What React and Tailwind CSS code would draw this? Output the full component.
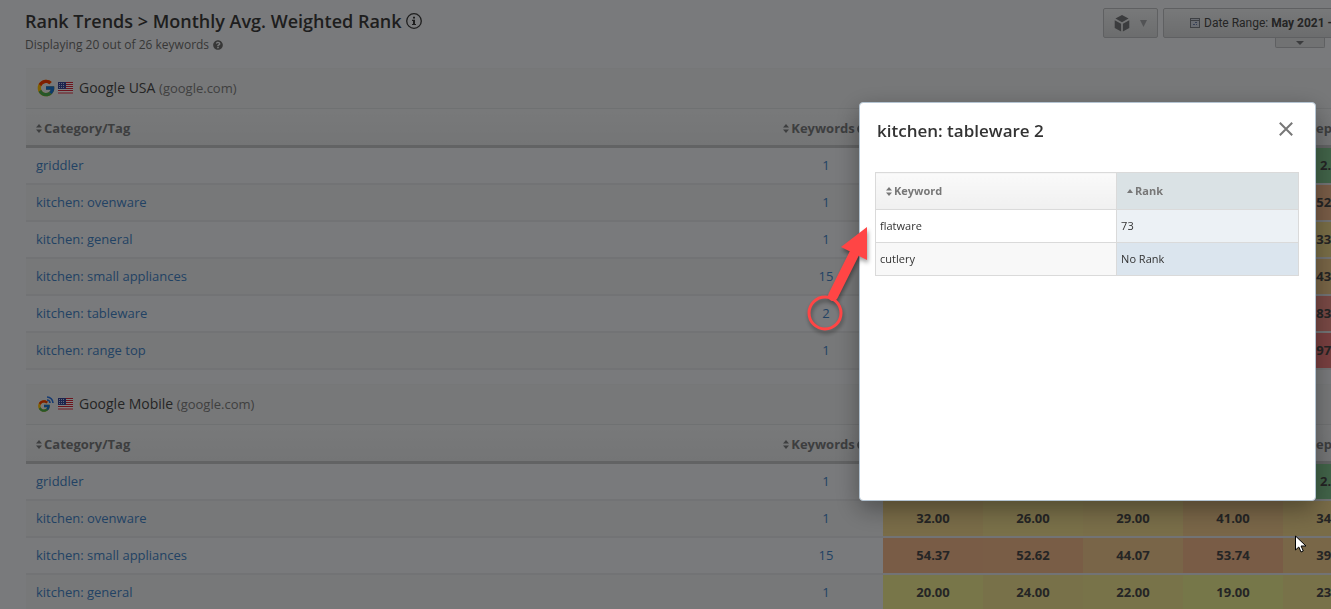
import React from 'react';
import { FcGoogle } from 'react-icons/fc';
import { FaQuestionCircle } from 'react-icons/fa';

const desktopRows = [
  { tag: 'griddler', count: 1, sep: ['2.00', 'bg-[#84c892]'] },
  { tag: 'kitchen: ovenware', count: 1, sep: ['52.00', 'bg-[#f3ba8e]'] },
  { tag: 'kitchen: general', count: 1, sep: ['33.00', 'bg-[#f3dc8e]'] },
  { tag: 'kitchen: small appliances', count: 15, sep: ['43.00', 'bg-[#f3cc8e]'] },
  { tag: 'kitchen: tableware', count: 2, sep: ['83.00', 'bg-[#f3928a]'] },
  { tag: 'kitchen: range top', count: 1, sep: ['97.00', 'bg-[#f37f80]'] },
];

const mobileRows = [
  { tag: 'griddler', count: 1, sep: ['2.00', 'bg-[#84c892]'] },
  {
    tag: 'kitchen: ovenware',
    count: 1,
    months: [
      ['32.00', 'bg-[#f3d890]'],
      ['26.00', 'bg-[#f3e092]'],
      ['29.00', 'bg-[#f3dc92]'],
      ['41.00', 'bg-[#f3cc90]'],
    ],
    sep: ['34.00', 'bg-[#f3d890]'],
  },
  {
    tag: 'kitchen: small appliances',
    count: 15,
    months: [
      ['54.37', 'bg-[#f3b88c]'],
      ['52.62', 'bg-[#f3ba8c]'],
      ['44.07', 'bg-[#f3ca90]'],
      ['53.74', 'bg-[#f3b88c]'],
    ],
    sep: ['39.00', 'bg-[#f3ce90]'],
  },
  {
    tag: 'kitchen: general',
    count: 1,
    months: [
      ['20.00', 'bg-[#f1ec92]'],
      ['24.00', 'bg-[#f1e292]'],
      ['22.00', 'bg-[#f1e692]'],
      ['19.00', 'bg-[#ecee92]'],
    ],
    sep: ['23.00', 'bg-[#f1e492]'],
  },
];

const emptyMonths = [['', ''], ['', ''], ['', ''], ['', '']];

const SortIcon = () => (
  <svg width="6" height="9" viewBox="0 0 6 9" className="shrink-0 fill-current" aria-hidden="true">
    <path d="M3 0L6 3.5H0zM0 5.5H6L3 9z" />
  </svg>
);

const InfoIcon = () => (
  <svg width="16" height="16" viewBox="0 0 16 16" fill="none" aria-hidden="true">
    <circle cx="8" cy="8" r="7.3" stroke="currentColor" strokeWidth="1.3" />
    <path d="M7 3.7h2v1.8H7zM6 6.7h3v4.2h1v1.2H6v-1.2h1V7.9H6z" fill="currentColor" />
  </svg>
);

const CubeIcon = () => (
  <svg width="16" height="17" viewBox="0 0 16 17" fill="currentColor" aria-hidden="true">
    <path d="M8 0l6.6 3.6L8 7.2 1.4 3.6zM.7 5.3l6.4 3.5v7.6L.7 12.9zM15.3 5.3v7.6l-6.4 3.5V8.8z" />
  </svg>
);

const CalendarIcon = () => (
  <svg width="10" height="10" viewBox="0 0 10 10" aria-hidden="true">
    <rect x="0.5" y="0.5" width="9" height="9" fill="#d3d9e4" stroke="#7d8088" />
    <path d="M1 2.5h8" stroke="#7d8088" />
    <path d="M5 4.5h2M3 6.5h2M6 6.5h1" stroke="#6f80ac" />
  </svg>
);

const FlagIcon = () => (
  <svg width="15" height="12" viewBox="0 0 15 12" aria-hidden="true">
    <rect width="15" height="12" fill="#fff" />
    <path d="M0 .5h15M0 2.5h15M0 4.5h15M0 6.5h15M0 8.5h15M0 11h15" stroke="#d8283c" />
    <rect width="8" height="7" fill="#3a4a9c" />
    <path d="M1 1.5h6M1 3.5h6M1 5.5h6" stroke="#c8d0f0" strokeDasharray="1 1" />
  </svg>
);

const MobileGoogleIcon = () => (
  <span className="relative flex h-5 w-5 items-end pb-px pl-px">
    <FcGoogle className="h-3.5 w-3.5" />
    <svg width="8" height="8" viewBox="0 0 8 8" fill="none" className="absolute top-0.5 right-0.5" aria-hidden="true">
      <path d="M1 1a6 6 0 0 1 6 6M1 4a3 3 0 0 1 3 3" stroke="#2f78e4" strokeWidth="1.7" />
    </svg>
  </span>
);

function RankTable({ icon, name, rows }) {
  return (
    <section className="mb-3.5 overflow-hidden">
      <h2 className="flex h-10 items-center gap-0.5 border-t border-[#eceff1] bg-[#eff1f3] pb-0.5 pl-2.5 text-sm text-[#4a4a4a]">
        {icon}
        <FlagIcon />
        <span className="pl-1">
          {name} <span className="text-[13px] text-[#808080]">(google.com)</span>
        </span>
      </h2>
      <table className="w-[calc(100%+52px)] table-fixed border-separate border-spacing-0 text-[13px]">
        <colgroup>
          <col />
          <col className="w-[114px]" />
          <col className="w-[100px]" />
          <col className="w-[100px]" />
          <col className="w-[100px]" />
          <col className="w-[100px]" />
          <col className="w-[100px]" />
        </colgroup>
        <thead>
          <tr className="h-10 bg-linear-to-b from-[#f1f3f5] to-[#e8eaec] text-[#7b7d7f] *:border-t *:border-b-3 *:border-t-[#dfe2e4] *:border-b-[#c4c6c8] *:pt-[3px] *:pb-0">
            <th className="px-2.5 text-left font-bold">
              <span className="flex items-center gap-0.5"><SortIcon />Category/Tag</span>
            </th>
            <th className="px-0 font-bold">
              <span className="flex items-center justify-center gap-0.5 pr-0.5 whitespace-nowrap">
                <SortIcon />Keywords <FaQuestionCircle className="h-2.5 w-2.5" />
              </span>
            </th>
            <th colSpan={4} />
            <th className="px-0 font-bold">
              <span className="flex items-center justify-center gap-0.5 whitespace-nowrap"><SortIcon />Sep 2021</span>
            </th>
          </tr>
        </thead>
        <tbody>
          {rows.map((row) => (
            <tr key={row.tag} className="h-[37px] *:border-b-2 *:border-[#e5e7ea] *:py-0 even:bg-[#eff1f3]">
              <td className="px-2.5"><a href="#" className="text-[#4585c8]">{row.tag}</a></td>
              <td className="text-center"><a href="#" className="text-[#4585c8]">{row.count}</a></td>
              {[...(row.months || emptyMonths), row.sep].map(([value, color], i) => (
                <td key={i} className={`text-center font-bold text-[#4a4a4a] ${color}`}>{value}</td>
              ))}
            </tr>
          ))}
        </tbody>
      </table>
    </section>
  );
}

function KeywordDialog() {
  return (
    <div
      role="dialog"
      aria-labelledby="dialog-title"
      className="fixed top-[102px] right-[15px] h-[399px] w-[457px] rounded border border-[#b4c4d2] bg-white pr-4 pl-[15px] shadow-[0_8px_24px_rgba(0,0,0,0.35)]"
    >
      <div className="flex h-[69px] items-start justify-between pt-4 pr-1 pl-0.5">
        <h2 id="dialog-title" className="text-[17px] leading-6 font-semibold text-[#333]">kitchen: tableware 2</h2>
        <button type="button" aria-label="Close" className="px-0.5 py-[3px] text-[#777]">
          <svg width="14" height="14" viewBox="0 0 14 14" fill="none" stroke="currentColor" strokeWidth="2">
            <path d="M.8.8l12.4 12.4M13.2.8L.8 13.2" />
          </svg>
        </button>
      </div>
      <table className="w-full table-fixed border-collapse border border-[#dadada] text-[11px] text-[#333]">
        <thead>
          <tr className="h-[37px] text-left text-[#777]">
            <th className="w-[57%] border border-[#dadada] bg-linear-to-b from-[#fafafa] to-[#f0f0f0] px-2.5 font-bold">
              <span className="flex items-center gap-0.5"><SortIcon />Keyword</span>
            </th>
            <th className="border border-[#dadada] bg-[#dae2e5] px-2.5 font-bold">
              <span className="flex items-center gap-0.5">
                <svg width="6" height="4" viewBox="0 0 6 4" className="fill-current" aria-hidden="true"><path d="M3 0L6 4H0z" /></svg>
                Rank
              </span>
            </th>
          </tr>
        </thead>
        <tbody>
          <tr className="h-[33px]">
            <td className="border border-[#dadada] px-1">flatware</td>
            <td className="border border-[#dadada] bg-[#ecf1f5] px-1">73</td>
          </tr>
          <tr className="h-[33px]">
            <td className="border border-[#dadada] bg-[#f8f8f8] px-1">cutlery</td>
            <td className="border border-[#dadada] bg-[#dbe5ee] px-1">No Rank</td>
          </tr>
        </tbody>
      </table>
    </div>
  );
}

export default function App() {
  return (
    <div className="h-screen overflow-hidden bg-[#f3f5f8] font-['Open_Sans',sans-serif]">
      <header className="flex h-[68px] items-start justify-between pl-[25px]">
        <div className="pt-2">
          <h1 className="flex items-center gap-1 text-lg leading-[26px] font-semibold whitespace-nowrap text-[#3c3c3c]">
            Rank Trends &gt; Monthly Avg. Weighted Rank <InfoIcon />
          </h1>
          <p className="flex items-center gap-1 text-xs leading-[22px] text-[#6f6f6f]">
            Displaying 20 out of 26 keywords <FaQuestionCircle className="h-2.5 w-2.5" />
          </p>
        </div>
        <div className="-mr-[106px] flex gap-[5px] pt-2">
          <button type="button" aria-label="View" className="flex h-[30px] w-[55px] items-center justify-center gap-2.5 rounded-xs border border-[#bfc1c4] bg-linear-to-b from-[#f0f2f4] to-[#d8dadc] text-[#77797c]">
            <CubeIcon />
            <svg width="7" height="7" viewBox="0 0 7 7" fill="#a5a7aa" aria-hidden="true"><path d="M0 0h7L3.500 7z" /></svg>
          </button>
          <div className="flex w-[274px] flex-col items-center">
            <button type="button" className="flex h-[30px] w-full items-center gap-1 rounded-xs border border-[#bfc1c4] bg-linear-to-b from-[#f0f2f4] to-[#d8dadc] pl-[26px] font-['Roboto',sans-serif] text-xs whitespace-nowrap text-[#4a4a4a]">
              <CalendarIcon />
              <span>Date Range: <b>May 2021 - Sep 2021</b></span>
            </button>
            <button type="button" aria-label="More dates" className="flex h-2.5 w-[50px] items-center justify-center rounded-b-xs border border-t-0 border-[#bfc1c4] bg-[#e2e4e6] text-[#77797c]">
              <svg width="8" height="4" viewBox="0 0 8 4" fill="currentColor"><path d="M0 0h8L4 4z" /></svg>
            </button>
          </div>
        </div>
      </header>
      <main className="pl-[26px]">
        <RankTable icon={<FcGoogle className="h-5 w-5" />} name="Google USA" rows={desktopRows} />
        <RankTable icon={<MobileGoogleIcon />} name="Google Mobile" rows={mobileRows} />
      </main>

      <div className="fixed inset-0 bg-black/50" />
      <KeywordDialog />

      {/* callout from the keyword count to the dialog */}
      <svg width="72" height="116" viewBox="0 0 72 116" className="fixed top-[222px] right-[459px] drop-shadow-[1px_3px_2px_rgba(0,0,0,0.4)]" aria-hidden="true">
        <circle cx="25" cy="91" r="16" fill="none" stroke="#ff4545" strokeWidth="3" />
        <path d="M33 74L54 32" stroke="#ff4545" strokeWidth="10" strokeLinecap="round" />
        <path d="M67 5L41 25L67 38z" fill="#ff4545" />
      </svg>
      <svg width="13" height="19" viewBox="0 0 13 19" className="fixed top-[535px] right-[23px]" aria-hidden="true">
        <path d="M.5 1v14l3.3-3 2.2 5 2.3-1-2.2-5H11z" fill="#fff" stroke="#000" />
      </svg>
    </div>
  );
}
